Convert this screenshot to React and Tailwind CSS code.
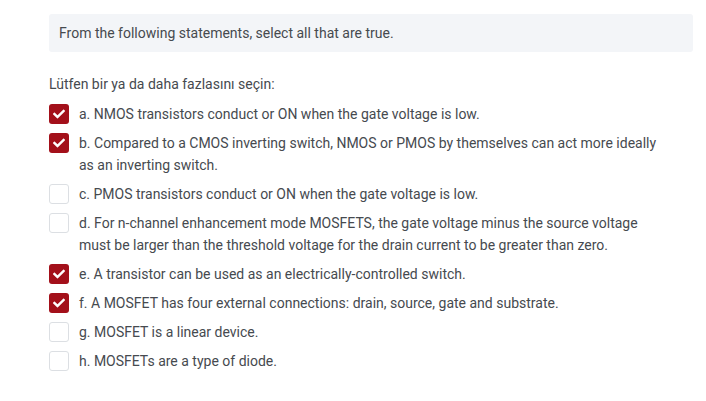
import { FaCheck } from "react-icons/fa";

const options = [
  { id: "a", text: "a. NMOS transistors conduct or ON when the gate voltage is low.", checked: true },
  {
    id: "b",
    text: "b. Compared to a CMOS inverting switch, NMOS or PMOS by themselves can act more ideally as an inverting switch.",
    checked: true,
  },
  { id: "c", text: "c. PMOS transistors conduct or ON when the gate voltage is low.", checked: false },
  {
    id: "d",
    text: "d. For n-channel enhancement mode MOSFETS, the gate voltage minus the source voltage must be larger than the threshold voltage for the drain current to be greater than zero.",
    checked: false,
  },
  { id: "e", text: "e. A transistor can be used as an electrically-controlled switch.", checked: true },
  { id: "f", text: "f. A MOSFET has four external connections: drain, source, gate and substrate.", checked: true },
  { id: "g", text: "g. MOSFET is a linear device.", checked: false },
  { id: "h", text: "h. MOSFETs are a type of diode.", checked: false },
];

export default function App() {
  return (
    <div
      className="bg-white w-[706px] h-[401px] pt-[14px] pl-[49px] pr-[13px] text-[14px] text-[#464a4f]"
      style={{ fontFamily: "Roboto, 'Liberation Sans', sans-serif" }}
    >
      {/* Question */}
      <div className="bg-[#f3f5f8] rounded-[3px] h-[38px] flex items-center px-[10px]">
        From the following statements, select all that are true.
      </div>

      <div className="mt-[22px] leading-[21px]">Lütfen bir ya da daha fazlasını seçin:</div>

      {/* Options */}
      <div className="mt-[8px] flex flex-col gap-[7px]">
        {options.map((opt) => (
          <label key={opt.id} className="flex items-start">
            <span
              className={`mt-[1px] w-[20px] h-[20px] shrink-0 rounded-[3px] flex items-center justify-center ${
                opt.checked ? "bg-[#a3101a]" : "bg-white border border-[#dcdfe3]"
              }`}
            >
              {opt.checked && <FaCheck className="w-[12px] h-[12px] text-white" />}
            </span>
            <span className="ml-[10px] leading-[22px] w-[590px]">{opt.text}</span>
          </label>
        ))}
      </div>
    </div>
  );
}
